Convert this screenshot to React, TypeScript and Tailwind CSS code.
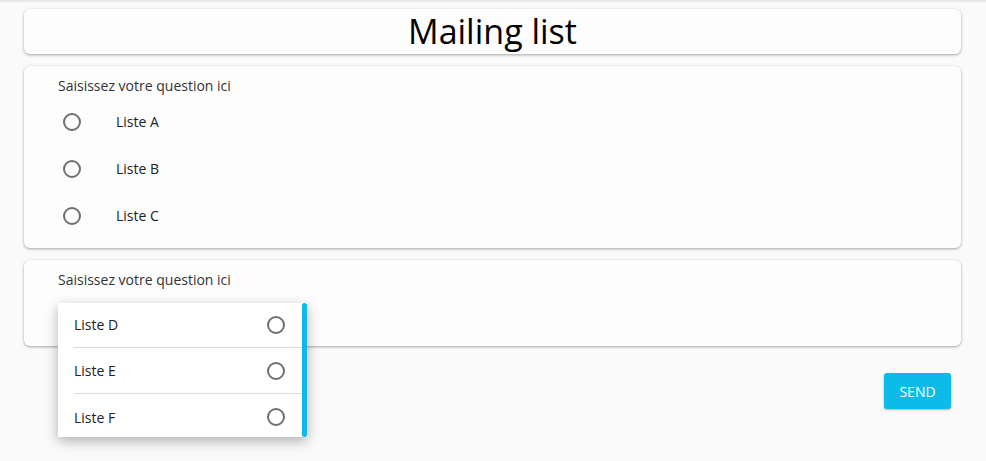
import React from "react";

function Radio() {
  return <span className="block w-[18px] h-[18px] rounded-full border-2 border-[#707070]" />;
}

export default function App() {
  const font = { fontFamily: '"Open Sans", sans-serif' };
  return (
    <div className="w-[986px] h-[461px] bg-[#fafafa] relative overflow-hidden text-[#222]" style={font}>
      <div className="h-[3px] bg-gradient-to-b from-[#e2e2e2] to-[#fafafa]" />
      <div className="pl-[24px] pr-[25px] pt-[6px] flex flex-col gap-[12px]">
        <div className="h-[45px] rounded-[6px] bg-[#fdfdfd] shadow-[0_1px_3px_rgba(0,0,0,0.35)] flex items-center justify-center">
          <h1 className="text-[34px] leading-none text-black font-normal pb-[2px]">Mailing list</h1>
        </div>
        <div className="h-[182px] rounded-[6px] bg-[#fdfdfd] shadow-[0_1px_3px_rgba(0,0,0,0.35)] pl-[34px] pt-[10px]">
          <div className="text-[14px] leading-[20px] text-[#333]">Saisissez votre question ici</div>
          <div className="flex flex-col mt-[2px]">
            {["Liste A", "Liste B", "Liste C"].map((l) => (
              <div key={l} className="h-[47px] flex items-center">
                <div className="w-[28px] flex justify-center"><Radio /></div>
                <span className="ml-[30px] text-[14px] text-[#222]">{l}</span>
              </div>
            ))}
          </div>
        </div>
        <div className="h-[86px] rounded-[6px] bg-[#fdfdfd] shadow-[0_1px_3px_rgba(0,0,0,0.35)] pl-[34px] pt-[10px] relative">
          <div className="text-[14px] leading-[20px] text-[#333]">Saisissez votre question ici</div>
          <div className="absolute left-[34px] top-[43px] w-[249px] h-[134px] bg-white shadow-[0_4px_12px_rgba(0,0,0,0.3)] flex z-10 overflow-hidden">
            <div className="flex-1 flex flex-col pl-[16px] -mt-[1px]">
              {["Liste D", "Liste E", "Liste F"].map((l, i) => (
                <div key={l} className={"h-[46px] shrink-0 flex items-center justify-between pr-[17px] " + (i < 2 ? "border-b border-[#dcdcdc]" : "")}>
                  <span className="text-[14px] text-[#222]">{l}</span>
                  <Radio />
                </div>
              ))}
            </div>
            <div className="w-[5px] bg-[#12b8e6] rounded-[3px]" />
          </div>
        </div>
        <div className="flex justify-end pr-[10px] mt-[15px]">
          <button className="w-[67px] h-[36px] rounded-[3px] bg-[#0dbbe8] text-white text-[14px] font-medium uppercase shadow-[0_1px_2px_rgba(0,0,0,0.3)]">Send</button>
        </div>
      </div>
    </div>
  );
}
